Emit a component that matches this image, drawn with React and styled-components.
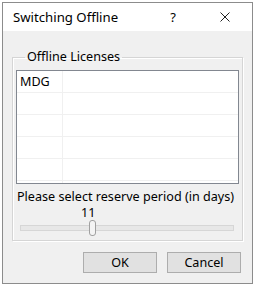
import React from "react"
import styled, { createGlobalStyle } from "styled-components"

const Global = createGlobalStyle`
  html, body {
    margin: 0;
    padding: 0;
    background: #ffffff;
  }
  body {
    font-family: "Noto Sans", "Liberation Sans", sans-serif;
    font-size: 12.6px;
    color: #000;
  }
`

const Window = styled.div`
  margin: 2px 0 0 2px;
  width: 251px;
  height: 282px;
  box-sizing: border-box;
  border: 1px solid #8c8c8c;
  background: #f0f0f0;
  display: flex;
  flex-direction: column;
`

const TitleBar = styled.div`
  height: 28px;
  background: #ffffff;
  display: flex;
  align-items: center;
  padding-left: 10px;
  font-size: 13.2px;
`

const Title = styled.div`
  flex: 1;
`

const TitleButton = styled.div`
  width: ${(p) => p.w}px;
  display: flex;
  justify-content: center;
  align-items: center;
  font-size: 13px;
`

const Body = styled.div`
  flex: 1;
  display: flex;
  flex-direction: column;
  padding: 18px 9px 10px 9px;
`

const Group = styled.fieldset`
  margin: 0;
  min-width: 0;
  padding: 0 3px 0 3px;
  border: 1px solid #d5d5d5;
  box-shadow: inset 1px 1px 0 #ffffff, 1px 1px 0 #ffffff;
  height: 192px;
  box-sizing: border-box;
  display: flex;
  flex-direction: column;
`

const Legend = styled.legend`
  margin-left: 9px;
  padding: 0 2px;
  line-height: 16px;
`

const List = styled.div`
  margin-top: 5px;
  height: 114px;
  box-sizing: border-box;
  border: 1px solid #828790;
  background: #ffffff;
  overflow: hidden;
`

const Row = styled.div`
  display: grid;
  grid-template-columns: 46px 1fr;
  height: 22px;
  box-sizing: border-box;
  border-bottom: 1px solid #f0f0f0;
`

const Cell = styled.div`
  padding-left: 3px;
  line-height: 22px;
  border-right: ${(p) => (p.first ? "1px solid #f0f0f0" : "none")};
`

const Label = styled.div`
  margin-top: 5px;
  padding-left: 1px;
  line-height: 15px;
  white-space: nowrap;
`

const Value = styled.div`
  margin-top: 2px;
  line-height: 14px;
  padding-left: 65px;
`

const SliderRow = styled.div`
  margin: 0 5px 0 4px;
  height: 16px;
  display: flex;
  align-items: center;
`

const Track = styled.div`
  flex: 1;
  min-width: 0;
  height: 4px;
  background: #e7e7e7;
  border: 1px solid #d6d6d6;
  display: flex;
  align-items: center;
`

const Thumb = styled.div`
  flex: none;
  width: 7px;
  height: 16px;
  box-sizing: border-box;
  border: 1px solid #a0a0a0;
  border-radius: 3px;
  background: #f4f4f4;
  margin-left: ${(p) => p.offset}px;
`

const Buttons = styled.div`
  margin-top: 11px;
  display: flex;
  justify-content: flex-end;
  gap: 10px;
  padding-right: 2px;
`

const Button = styled.button`
  width: 74px;
  height: 21px;
  border: 1px solid #adadad;
  background: #e1e1e1;
  font-family: inherit;
  font-size: 12.6px;
  color: #000;
  padding: 0;
`

const CloseIcon = () => (
  <svg width="10" height="10" viewBox="0 0 10 10">
    <path d="M0.5 0.5 L9.5 9.5 M9.5 0.5 L0.5 9.5" stroke="#222" strokeWidth="1" />
  </svg>
)

const App = () => {
  const rows = ["MDG", "", "", "", "", ""]
  return (
    <>
      <Global />
      <Window>
        <TitleBar>
          <Title>Switching Offline</Title>
          <TitleButton w={16}>?</TitleButton>
          <TitleButton w={30} style={{ marginLeft: 29, marginRight: 12 }}>
            <CloseIcon />
          </TitleButton>
        </TitleBar>
        <Body>
          <Group>
            <Legend>Offline Licenses</Legend>
            <List>
              {rows.map((r, i) => (
                <Row key={i}>
                  <Cell first>{r}</Cell>
                  <Cell />
                </Row>
              ))}
            </List>
            <Label>Please select reserve period (in days)</Label>
            <Value>11</Value>
            <SliderRow>
              <Track>
                <Thumb offset={68} />
              </Track>
            </SliderRow>
          </Group>
          <Buttons>
            <Button>OK</Button>
            <Button>Cancel</Button>
          </Buttons>
        </Body>
      </Window>
    </>
  )
}

export default App
